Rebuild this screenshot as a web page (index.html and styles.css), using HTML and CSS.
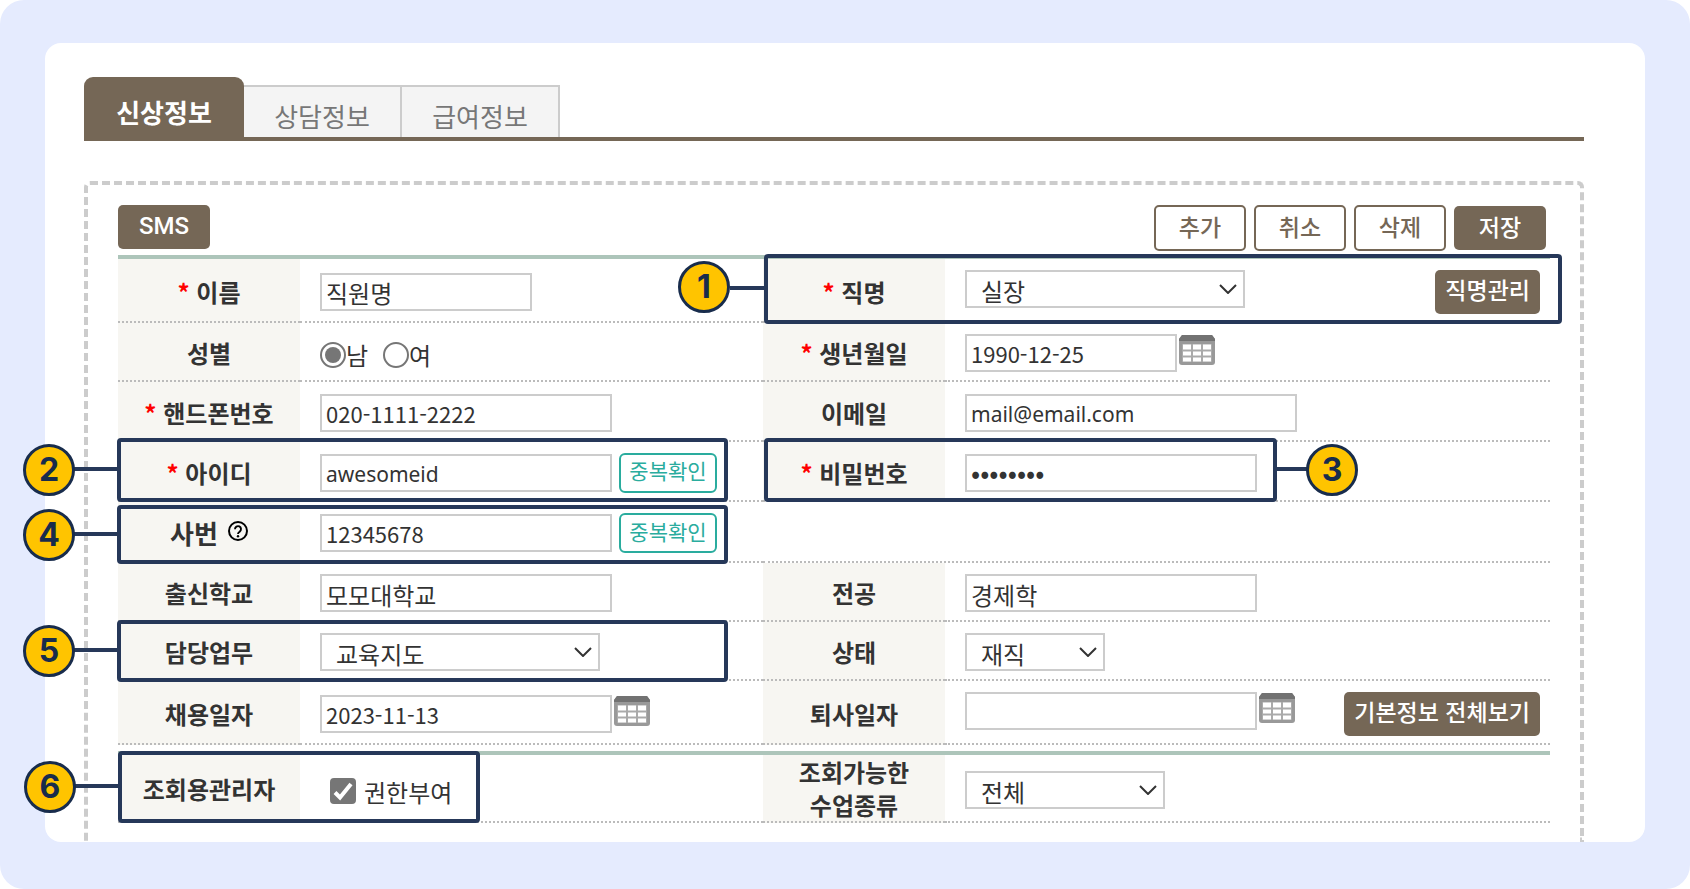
FILE: index.html
```html
<!DOCTYPE html>
<html lang="ko">
<head>
<meta charset="utf-8">
<title>신상정보</title>
<meta name="viewport" content="width=device-width, initial-scale=1">
<link rel="stylesheet" href="styles.css">
</head>
<body>
<svg class="sprite" aria-hidden="true">
  <symbol id="icon-calendar" viewBox="0 0 36 30">
    <path d="M3 0h30l3 4v23a3 3 0 0 1-3 3H3a3 3 0 0 1-3-3V4z" fill="#999"/>
    <path d="M3 0h30l3 4v2H0V4z" fill="#727272"/>
    <path d="M3 9h30v18H3z" fill="#aaa"/>
    <path d="M4 9.500h8v5H4zM14 9.500h8v5h-8zM24 9.500h8v5h-8zM4 16.500h8v4H4zM14 16.500h8v4h-8zM24 16.500h8v4h-8zM4 22.500h8v4H4zM14 22.500h8v4h-8zM24 22.500h8v4h-8z" fill="#fff"/>
  </symbol>
  <symbol id="icon-chevron" viewBox="0 0 18 10">
    <path d="M1 1l8 8 8-8" fill="none" stroke="#333" stroke-width="2"/>
  </symbol>
  <symbol id="icon-help" viewBox="0 0 20 20">
    <circle cx="10" cy="10" r="9" fill="none" stroke="#000" stroke-width="2"/>
    <path d="M7 8.200a3 3 0 1 1 4.700 2.400c-1.100.8-1.700 1.200-1.700 2.400" fill="none" stroke="#000" stroke-width="1.900"/>
    <circle cx="10" cy="15.200" r="1.200"/>
  </symbol>
  <symbol id="icon-check" viewBox="0 0 26 26">
    <path d="M5 14.500l5 5L21 6" fill="none" stroke="#fff" stroke-width="4"/>
  </symbol>
</svg>
<div class="page">
  <main class="card">
    <nav class="tabs">
      <a class="tab tab-active" href="#profile">신상정보</a>
      <a class="tab" href="#counsel">상담정보</a>
      <a class="tab" href="#salary">급여정보</a>
    </nav>
    <form class="panel">
      <div class="toolbar">
        <button class="btn btn-solid btn-sms" type="button">SMS</button>
        <div class="actions">
          <button class="btn btn-line" type="button">추가</button>
          <button class="btn btn-line" type="button">취소</button>
          <button class="btn btn-line" type="button">삭제</button>
          <button class="btn btn-solid" type="button">저장</button>
        </div>
      </div>
      <table class="fields">
        <colgroup><col class="col-label"><col class="col-value"><col class="col-label"><col></colgroup>
        <tbody>
        <tr class="row-tall">
          <th scope="row"><label for="name"><span class="req">*</span> 이름</label></th>
          <td><input class="text w-short" id="name" type="text" value="직원명"></td>
          <th scope="row"><label for="title"><span class="req">*</span> 직명</label>
            <span class="callout callout-title"><span class="line"></span><b class="badge">1</b></span></th>
          <td><div class="group group-top"><span class="select w-select"><select id="title"><option>실장</option></select><svg class="chevron"><use href="#icon-chevron"/></svg></span><button class="btn btn-solid btn-wide push" type="button">직명관리</button></div></td>
        </tr>
        <tr class="row-short">
          <th scope="row">성별</th>
          <td><div class="group group-radio"><label class="radio"><input type="radio" name="sex" checked>남</label><label class="radio"><input type="radio" name="sex">여</label></div></td>
          <th scope="row"><label for="birth"><span class="req">*</span> 생년월일</label></th>
          <td><div class="group group-top"><input class="text number w-short" id="birth" type="text" value="1990-12-25"><button class="cal" type="button" aria-label="달력"><svg><use href="#icon-calendar"/></svg></button></div></td>
        </tr>
        <tr>
          <th scope="row"><label for="phone"><span class="req">*</span> 핸드폰번호</label></th>
          <td><input class="text number w-mid" id="phone" type="text" value="020-1111-2222"></td>
          <th scope="row"><label for="email">이메일</label></th>
          <td><input class="text latin w-long" id="email" type="text" value="mail@email.com"></td>
        </tr>
        <tr>
          <th scope="row"><label for="userid"><span class="req">*</span> 아이디</label>
            <span class="callout callout-left callout-id"><span class="line"></span><b class="badge">2</b></span></th>
          <td><div class="group group-check"><input class="text latin w-mid" id="userid" type="text" value="awesomeid"><button class="btn-check" type="button">중복확인</button></div></td>
          <th scope="row"><label for="password"><span class="req">*</span> 비밀번호</label>
            <span class="callout callout-password"><span class="line"></span><b class="badge">3</b></span></th>
          <td><input class="text password w-mid" id="password" type="password" value="password"></td>
        </tr>
        <tr class="row-empno">
          <th scope="row"><label class="with-help" for="empno">사번 <svg class="help"><use href="#icon-help"/></svg></label>
            <span class="callout callout-left callout-empno"><span class="line"></span><b class="badge">4</b></span></th>
          <td><div class="group group-check"><input class="text number w-mid" id="empno" type="text" value="12345678"><button class="btn-check" type="button">중복확인</button></div></td>
          <td colspan="2"></td>
        </tr>
        <tr class="row-short">
          <th scope="row"><label for="school">출신학교</label></th>
          <td><input class="text w-mid" id="school" type="text" value="모모대학교"></td>
          <th scope="row"><label for="major">전공</label></th>
          <td><input class="text w-mid" id="major" type="text" value="경제학"></td>
        </tr>
        <tr class="row-short">
          <th scope="row"><label for="duty">담당업무</label>
            <span class="callout callout-left callout-duty"><span class="line"></span><b class="badge">5</b></span></th>
          <td><span class="select w-select"><select id="duty"><option>교육지도</option></select><svg class="chevron"><use href="#icon-chevron"/></svg></span></td>
          <th scope="row"><label for="status">상태</label></th>
          <td><span class="select w-status"><select id="status"><option>재직</option></select><svg class="chevron"><use href="#icon-chevron"/></svg></span></td>
        </tr>
        <tr class="row-tall">
          <th scope="row"><label for="hired">채용일자</label></th>
          <td><div class="group group-top"><input class="text number w-mid" id="hired" type="text" value="2023-11-13"><button class="cal" type="button" aria-label="달력"><svg><use href="#icon-calendar"/></svg></button></div></td>
          <th scope="row"><label for="retired">퇴사일자</label></th>
          <td><div class="group group-top"><input class="text number w-mid" id="retired" type="text" value=""><button class="cal" type="button" aria-label="달력"><svg><use href="#icon-calendar"/></svg></button><button class="btn btn-solid btn-wide push" type="button">기본정보 전체보기</button></div></td>
        </tr>
        </tbody>
      </table>
      <table class="fields fields-admin">
        <colgroup><col class="col-label"><col class="col-value"><col class="col-label"><col></colgroup>
        <tbody>
        <tr class="row-admin">
          <th scope="row">조회용관리자
            <span class="callout callout-admin"><span class="line"></span><b class="badge">6</b></span></th>
          <td><label class="check"><span class="check-box"><input type="checkbox" checked><svg><use href="#icon-check"/></svg></span>권한부여</label></td>
          <th scope="row"><label for="scope">조회가능한<br>수업종류</label></th>
          <td><span class="select w-scope"><select id="scope"><option>전체</option></select><svg class="chevron"><use href="#icon-chevron"/></svg></span></td>
        </tr>
        </tbody>
      </table>
    </form>
  </main>
</div>
</body>
</html>
```
FILE: styles.css
```css
* { box-sizing: border-box; }

body {
  margin: 0;
  background: #fff;
  color: #333;
  font: 24px/33px "Noto Sans CJK KR", sans-serif;
}

.sprite { display: none; }

button, input, select { margin: 0; font: inherit; color: inherit; }
button { cursor: pointer; }

.page {
  padding: 43px 45px 47px;
  border-radius: 24px;
  background: #e5ebfe;
}

.card {
  padding: 34px 61px 0 39px;
  border-radius: 16px;
  background: #fff;
}

/* Tabs */
.tabs {
  display: flex;
  align-items: flex-end;
  border-bottom: 4px solid #756756;
}

.tab {
  width: 158px;
  height: 52px;
  padding-top: 11px;
  border: solid #ccc;
  border-width: 2px 2px 0 0;
  background: #f4f4f4;
  color: #777;
  font-size: 26px;
  line-height: 36px;
  text-align: center;
  text-decoration: none;
}

.tab-active {
  width: 160px;
  height: 60px;
  padding-top: 17px;
  border: 0;
  border-radius: 9px 9px 0 0;
  background: #756756;
  color: #fff;
  font-weight: 700;
}

/* Form panel */
.panel {
  margin-top: 40px;
  padding: 20px 30px 19px;
  border: 4px dashed #ccc;
  border-bottom: 0;
  border-radius: 6px 6px 0 0;
}

.toolbar {
  display: flex;
  justify-content: space-between;
  align-items: flex-start;
  padding: 0 4px 4px 0;
}

.actions { display: flex; align-items: center; gap: 8px; }

.btn {
  width: 92px;
  height: 44px;
  padding: 0 0 4px;
  border: 0;
  border-radius: 5px;
  font-size: 23px;
  font-weight: 500;
  line-height: 32px;
  white-space: nowrap;
}

.btn-solid { background: #756756; color: #fff; }
.btn-sms { padding-bottom: 2px; font-family: Roboto, sans-serif; font-size: 24px; }

.btn-line {
  height: 46px;
  border: 2px solid #756756;
  background: #fff;
  color: #756756;
}

.btn-wide { width: auto; padding: 0 10px 6px; }

.btn-check {
  width: 98px;
  height: 40px;
  padding: 0 0 5px;
  border: 2px solid #2aac9e;
  border-radius: 6px;
  background: #fff;
  color: #2aac9e;
  font-size: 21px;
  line-height: 30px;
}

/* Field table */
.fields {
  width: 100%;
  border-top: 4px solid #adc5ba;
  border-collapse: separate;
  border-spacing: 0;
  table-layout: fixed;
}

.fields-admin { margin-top: 6px; }

.col-label { width: 182px; }
.col-value { width: 463px; }

tr { position: relative; height: 60px; }
.row-tall { height: 64px; }
.row-short { height: 59px; }
.row-empno { height: 61px; }
.row-admin { height: 68px; }

th, td { border-bottom: 2px dotted #bbb; vertical-align: middle; }
th { padding: 2px 0 0; background: #f7f6f2; font-weight: 700; text-align: center; }
td { padding: 3px 10px 0 20px; text-align: left; }
.row-admin th { padding-top: 0; }

.req { color: #f00; }

.with-help { display: flex; justify-content: center; align-items: center; gap: 10px; font-size: 26px; }
.help { width: 20px; height: 20px; margin-bottom: 4px; }

.group { display: flex; align-items: center; }
.group-top { align-items: flex-start; }
.group-check { gap: 7px; }
.group-radio { padding-top: 3px; }
.push { margin-left: auto; }

.text {
  display: block;
  height: 38px;
  padding: 2px 4px 0;
  border: 2px solid #ccc;
  border-radius: 0;
  background: #fff;
}

.number { padding-top: 0; font-size: 22px; }
.latin { font-family: "Noto Sans", "Noto Sans CJK KR", sans-serif; font-size: 21px; }
.password { padding-top: 0; padding-bottom: 2px; font-size: 27px; }

.w-short { width: 212px; }
.w-mid { width: 292px; }
.w-long { width: 332px; }
.w-select { width: 280px; }
.w-status { width: 140px; }
.w-scope { width: 200px; }

.select { display: grid; align-items: center; }

.select select,
.select .chevron { grid-area: 1 / 1; }

.select select {
  width: 100%;
  height: 38px;
  padding: 2px 32px 0 14px;
  border: 2px solid #ccc;
  border-radius: 0;
  background: #fff;
  appearance: none;
}

.chevron {
  justify-self: end;
  width: 18px;
  height: 10px;
  margin-right: 8px;
  pointer-events: none;
}

.cal {
  width: 36px;
  height: 30px;
  margin: 1px 0 0 2px;
  padding: 0;
  border: 0;
  background: none;
}

.cal svg { display: block; width: 36px; height: 30px; }

.radio { display: flex; align-items: center; margin-right: 15px; }

.radio input {
  display: grid;
  place-content: center;
  width: 26px;
  height: 26px;
  border: 2px solid #767676;
  border-radius: 50%;
  background: #fff;
  appearance: none;
}

.radio input:checked::before {
  width: 16px;
  height: 16px;
  border-radius: 50%;
  background: #767676;
  content: "";
}

.check { display: flex; align-items: center; gap: 8px; padding: 3px 0 0 10px; }
.check-box { display: grid; }
.check-box input,
.check-box svg { grid-area: 1 / 1; width: 26px; height: 26px; }
.check-box input { border-radius: 4px; background: #fff; border: 2px solid #767676; appearance: none; }
.check-box input:checked { background: #767676; }
.check-box svg { z-index: 1; pointer-events: none; }

/* Numbered callouts laid over the table rows */
.callout {
  position: absolute;
  z-index: 2;
  border: 4px solid #263859;
  border-radius: 4px;
  pointer-events: none;
}

.callout .line {
  position: absolute;
  top: 50%;
  right: 100%;
  width: 48px;
  height: 4px;
  margin-top: -3px;
  background: #263859;
}

.badge {
  position: absolute;
  top: 50%;
  right: 100%;
  width: 52px;
  height: 52px;
  margin: -26px 46px 0 0;
  border: 3px solid #182c4c;
  border-radius: 50%;
  background: #ffc400;
  color: #182c4c;
  font-family: Inter, sans-serif;
  font-size: 32px;
  font-weight: 700;
  line-height: 46px;
  text-align: center;
}

.callout-title { top: -5px; right: -12px; bottom: -1px; left: 646px; }
.callout-title .line { width: 38px; }
.callout-title .badge { margin: -28px 38px 0 0; }

.callout-left { left: -1px; width: 611px; }
.callout-id { top: -4px; bottom: 0; }
.callout-empno { top: 3px; bottom: -1px; }
.callout-duty { top: -2px; bottom: -1px; }
.callout-admin { top: -4px; bottom: 0; left: 0; width: 362px; }

.callout-password { top: -4px; bottom: 0; left: 646px; width: 513px; }
.callout-password .line { right: auto; left: 100%; }
.callout-password .badge { right: auto; left: 100%; margin: -26px 0 0 33px; }
```
